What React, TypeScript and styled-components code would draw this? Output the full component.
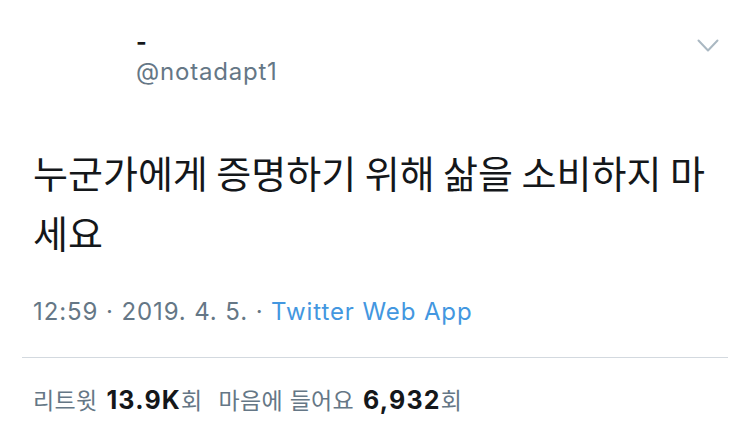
import * as React from 'react';
import styled, { createGlobalStyle } from 'styled-components';

const GlobalStyle = createGlobalStyle`
  body {
    margin: 0;
    background: #ffffff;
    font-family: 'Inter', 'Noto Sans CJK KR', sans-serif;
  }
`;

const TweetCard = styled.div`
  width: 750px;
  height: 439px;
  box-sizing: border-box;
  padding: 27px 22px 0 22px;
  background: #ffffff;
  overflow: hidden;
`;

const Header = styled.div`
  display: flex;
  justify-content: space-between;
  align-items: flex-start;
  padding-left: 114px;
`;

const Names = styled.div`
  display: flex;
  flex-direction: column;
`;

const DisplayName = styled.span`
  font-size: 23px;
  line-height: 30px;
  font-weight: 700;
  color: #14171a;
`;

const Handle = styled.span`
  font-size: 24px;
  line-height: 30px;
  color: #657786;
  letter-spacing: 0.8px;
`;

const MenuButton = styled.button`
  border: none;
  background: none;
  padding: 0;
  margin: 11px 7px 0 0;
  width: 26px;
  height: 16px;
  display: flex;
  align-items: center;
  justify-content: center;
  cursor: pointer;
`;

const Body = styled.p`
  margin: 55px 0 0 0;
  padding-left: 11px;
  font-family: 'Noto Sans CJK KR', sans-serif;
  font-size: 38px;
  line-height: 60px;
  color: #14171a;
`;

const Meta = styled.div`
  margin-top: 35px;
  padding-left: 11px;
  font-size: 24px;
  line-height: 30px;
  letter-spacing: 0.9px;
  color: #657786;
`;

const Source = styled.span`
  color: #4397e0;
`;

const Divider = styled.hr`
  margin: 30px 0 0 0;
  border: none;
  border-top: 1px solid #d3d9df;
`;

const Stats = styled.div`
  margin-top: 27px;
  padding-left: 11px;
  display: flex;
  align-items: baseline;
  gap: 16px;
  font-size: 23px;
  line-height: 30px;
  letter-spacing: 0.3px;
  color: #657786;
`;

const Stat = styled.span`
  display: inline-flex;
  align-items: baseline;
`;

const Count = styled.strong`
  margin-left: 9px;
  font-size: 25px;
  font-weight: 700;
  letter-spacing: 1.2px;
  color: #14171a;
`;

const Chevron = () => (
  <svg width="22" height="14" viewBox="0 0 22 14" fill="none">
    <path d="M1.5 1.5 L11 11.5 L20.5 1.5" stroke="#aab8c2" strokeWidth="2" strokeLinecap="round" strokeLinejoin="round" />
  </svg>
);

const App = (): JSX.Element => {
  return (
    <>
      <GlobalStyle />
      <TweetCard>
        <Header>
          <Names>
            <DisplayName>-</DisplayName>
            <Handle>@notadapt1</Handle>
          </Names>
          <MenuButton aria-label="더보기">
            <Chevron />
          </MenuButton>
        </Header>
        <Body>누군가에게 증명하기 위해 삶을 소비하지 마세요</Body>
        <Meta>
          12:59 · 2019. 4. 5. · <Source>Twitter Web App</Source>
        </Meta>
        <Divider />
        <Stats>
          <Stat>
            <span>리트윗</span>
            <Count>13.9K</Count>
            <span>회</span>
          </Stat>
          <Stat>
            <span>마음에 들어요</span>
            <Count>6,932</Count>
            <span>회</span>
          </Stat>
        </Stats>
      </TweetCard>
    </>
  );
};

export default App;
